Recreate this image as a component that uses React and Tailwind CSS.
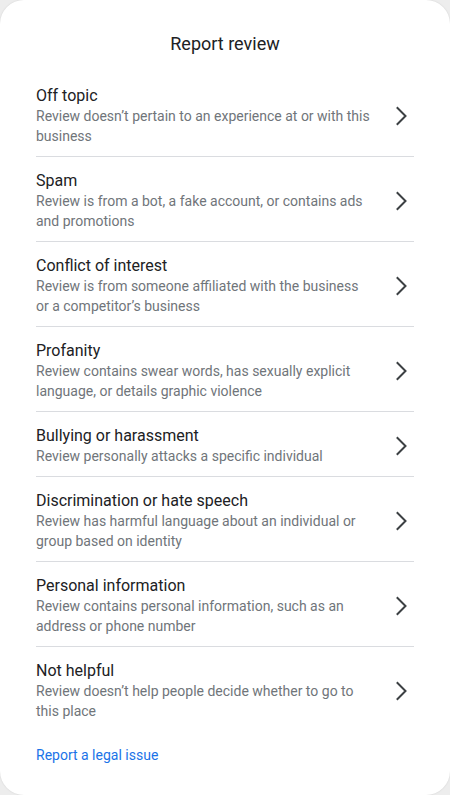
const REASONS = [
  { title: 'Off topic', desc: 'Review doesn’t pertain to an experience at or with this business' },
  { title: 'Spam', desc: 'Review is from a bot, a fake account, or contains ads and promotions' },
  { title: 'Conflict of interest', desc: 'Review is from someone affiliated with the business or a competitor’s business' },
  { title: 'Profanity', desc: 'Review contains swear words, has sexually explicit language, or details graphic violence' },
  { title: 'Bullying or harassment', desc: 'Review personally attacks a specific individual' },
  { title: 'Discrimination or hate speech', desc: 'Review has harmful language about an individual or group based on identity' },
  { title: 'Personal information', desc: 'Review contains personal information, such as an address or phone number' },
  { title: 'Not helpful', desc: 'Review doesn’t help people decide whether to go to this place' },
]

function Chevron() {
  return (
    <svg width="24" height="24" viewBox="0 0 24 24" fill="none" className="shrink-0">
      <polyline points="7.5,4 15.5,12 7.5,20" stroke="#3c4043" strokeWidth="2" strokeLinecap="square" strokeLinejoin="miter" />
    </svg>
  )
}

export default function App() {
  return (
    <div className="w-[450px] h-[795px] bg-[#ededed]" style={{ fontFamily: 'Roboto, "Liberation Sans", sans-serif' }}>
      <div className="h-full bg-white rounded-[24px] shadow-[0_0_2px_rgba(0,0,0,0.12)] px-9 pt-8">
        <h1 className="text-center text-[18px] leading-6 text-[#202124] mb-[16px]">Report review</h1>

        <div>
          {REASONS.map((r, i) => (
            <button key={i}
              className={`w-full flex items-center text-left pt-[14px] pb-[10px] ${i < REASONS.length - 1 ? 'border-b border-[#dadce0]' : ''}`}>
              <div className="w-[336px]">
                <div className="text-[16px] leading-5 text-[#202124]">{r.title}</div>
                <div className="text-[14px] leading-5 text-[#70757a]">{r.desc}</div>
              </div>
              <div className="ml-auto">
                <Chevron />
              </div>
            </button>
          ))}
        </div>

        <div className="mt-[14px] text-[14px] leading-5 text-[#1a73e8]">Report a legal issue</div>
      </div>
    </div>
  )
}
